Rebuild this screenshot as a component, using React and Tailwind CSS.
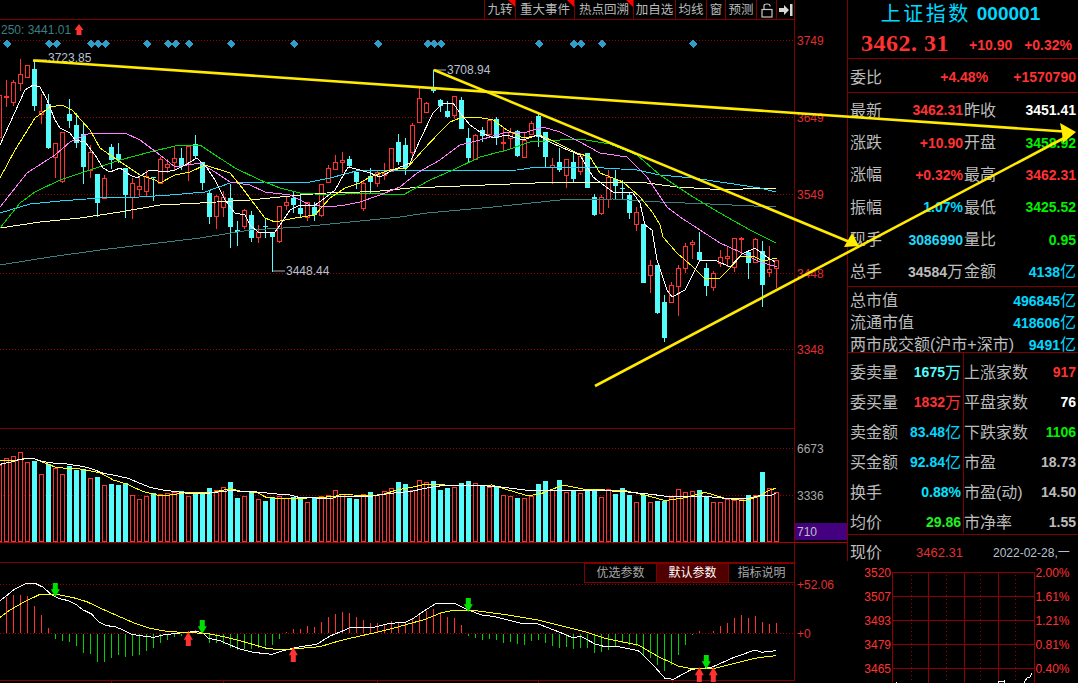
import React from "react";

const RED = "#ff3232";
const CYAN = "#54fcfc";
const LINE = "#800000";
const DOT = "#9a0000";

// k, wickTop, bodyTop, bodyBottom, wickBottom, up
const candles = [
  [-1, 95, 95, 137, 137, 1], [0, 80, 96, 97, 107, 1], [1, 80, 82, 102, 106, 1], [2, 59, 74, 83, 91, 1],
  [3, 65, 65, 77, 78, 1], [4, 61, 69, 106, 111, 0], [5, 94, 111, 114, 124, 1], [6, 94, 104, 148, 149, 0],
  [7, 143, 143, 157, 178, 1], [8, 132, 132, 181, 183, 1], [9, 99, 114, 121, 128, 0], [10, 113, 125, 143, 148, 0],
  [11, 122, 134, 167, 184, 0], [12, 145, 152, 170, 178, 1], [13, 174, 174, 203, 217, 0], [14, 175, 178, 198, 198, 1],
  [15, 144, 147, 160, 169, 0], [16, 143, 154, 160, 163, 0], [17, 168, 168, 195, 218, 0], [18, 178, 183, 197, 219, 1],
  [19, 177, 186, 189, 197, 1], [20, 170, 176, 191, 197, 1], [21, 177, 177, 178, 201, 0], [22, 157, 159, 183, 183, 1],
  [23, 159, 164, 167, 173, 1], [24, 146, 158, 162, 170, 1], [25, 148, 158, 166, 170, 0], [26, 146, 146, 164, 181, 1],
  [27, 135, 144, 156, 158, 0], [28, 162, 162, 183, 190, 0], [29, 190, 193, 217, 224, 0], [30, 195, 196, 216, 229, 1],
  [31, 191, 197, 207, 217, 1], [32, 184, 198, 227, 248, 0], [33, 221, 230, 232, 246, 0], [34, 209, 210, 226, 229, 1],
  [35, 211, 215, 238, 242, 0], [36, 225, 232, 237, 243, 1], [37, 219, 226, 227, 238, 0], [38, 232, 232, 237, 272, 0],
  [39, 206, 206, 241, 243, 1], [40, 197, 202, 205, 210, 1], [41, 192, 198, 205, 213, 0], [42, 194, 208, 214, 217, 0],
  [43, 202, 202, 217, 221, 1], [44, 202, 207, 215, 221, 0], [45, 184, 184, 215, 217, 1], [46, 165, 168, 182, 182, 1],
  [47, 155, 162, 169, 170, 1], [48, 152, 160, 162, 173, 1], [49, 156, 159, 166, 168, 0], [50, 172, 172, 182, 189, 0],
  [51, 180, 183, 208, 211, 1], [52, 168, 176, 182, 193, 0], [53, 170, 172, 183, 187, 1], [54, 163, 173, 175, 180, 1],
  [55, 148, 148, 171, 172, 1], [56, 134, 142, 162, 165, 0], [57, 138, 145, 168, 175, 0], [58, 123, 125, 152, 160, 1],
  [59, 87, 98, 122, 123, 1], [60, 102, 103, 112, 113, 1], [61, 70, 87, 91, 93, 0], [62, 99, 100, 106, 112, 0],
  [63, 101, 111, 117, 118, 0], [64, 96, 96, 115, 119, 1], [65, 97, 100, 129, 129, 0], [66, 128, 138, 158, 162, 0],
  [67, 134, 135, 159, 160, 1], [68, 127, 130, 136, 142, 0], [69, 119, 120, 134, 137, 1], [70, 117, 119, 138, 145, 0],
  [71, 128, 142, 143, 152, 1], [72, 128, 132, 138, 148, 1], [73, 130, 131, 156, 157, 0], [74, 132, 140, 157, 157, 1],
  [75, 121, 123, 134, 135, 1], [76, 113, 116, 137, 147, 0], [77, 132, 132, 157, 167, 0], [78, 158, 165, 167, 184, 1],
  [79, 148, 162, 170, 172, 0], [80, 159, 159, 175, 188, 1], [81, 152, 162, 179, 182, 0], [82, 153, 156, 171, 175, 1],
  [83, 153, 153, 188, 188, 0], [84, 194, 197, 215, 216, 0], [85, 195, 197, 213, 215, 1], [86, 170, 177, 199, 208, 1],
  [87, 170, 179, 186, 199, 0], [88, 180, 188, 189, 199, 0], [89, 192, 195, 213, 219, 0], [90, 207, 212, 224, 231, 1],
  [91, 224, 224, 283, 283, 0], [92, 260, 265, 275, 293, 1], [93, 265, 265, 313, 314, 0], [94, 295, 302, 338, 342, 0],
  [95, 282, 285, 302, 302, 1], [96, 265, 268, 286, 316, 1], [97, 243, 246, 268, 273, 1], [98, 240, 242, 244, 259, 1],
  [99, 232, 252, 260, 260, 0], [100, 263, 268, 286, 296, 0], [101, 271, 273, 287, 291, 1], [102, 250, 257, 263, 267, 1],
  [103, 247, 256, 258, 267, 1], [104, 238, 238, 267, 272, 1], [105, 237, 238, 239, 255, 1], [106, 250, 252, 263, 279, 0],
  [107, 238, 239, 262, 263, 1], [108, 241, 251, 285, 307, 0], [109, 246, 269, 272, 277, 1], [110, 260, 260, 268, 288, 1],
];

const maLines = [
  ["#3d7f80", [[0, 265], [50, 257], [100, 250], [150, 244], [200, 238], [250, 230], [300, 227], [350, 222], [400, 217], [427, 213], [493, 207], [560, 200], [613, 199], [660, 202], [710, 204], [776, 207]]],
  ["#ffffb0", [[0, 228], [40, 222], [80, 218], [120, 212], [160, 205], [200, 203], [250, 200], [300, 195], [340, 192], [360, 192], [380, 191], [410, 188], [460, 186], [510, 184], [560, 182], [593, 182], [647, 183], [677, 187], [710, 189], [743, 189], [776, 188]]],
  ["#20d8f8", [[0, 213], [30, 204], [60, 201], [100, 198], [140, 197], [170, 195], [205, 192], [230, 183], [265, 182], [310, 182], [330, 178], [360, 170], [403, 170], [460, 171], [517, 170], [537, 167], [587, 167], [637, 170], [660, 175], [693, 178], [727, 183], [760, 188], [776, 192]]],
  ["#00e000", [[0, 228], [20, 203], [35, 192], [60, 180], [90, 170], [120, 160], [150, 152], [175, 146], [200, 145], [215, 155], [235, 168], [260, 180], [280, 188], [300, 193], [330, 195], [360, 193], [403, 195], [430, 180], [453, 170], [480, 157], [507, 150], [530, 142], [560, 140], [580, 139], [610, 144], [637, 155], [660, 175], [693, 197], [720, 213], [750, 230], [776, 243]]],
  ["#ff80ff", [[0, 207], [27, 173], [55, 155], [70, 142], [90, 133], [110, 134], [125, 133], [140, 140], [160, 155], [175, 167], [200, 163], [215, 172], [230, 182], [250, 185], [265, 192], [290, 195], [310, 205], [330, 207], [345, 205], [360, 202], [380, 195], [400, 187], [417, 173], [440, 160], [460, 145], [480, 140], [503, 133], [527, 132], [543, 127], [560, 132], [580, 142], [600, 153], [627, 157], [647, 177], [667, 207], [680, 217], [700, 230], [720, 243], [740, 252], [760, 262], [777, 267]]],
  ["#ffff00", [[0, 178], [15, 150], [35, 118], [50, 107], [62, 105], [72, 110], [90, 130], [100, 148], [110, 155], [125, 165], [140, 175], [155, 180], [160, 183], [175, 175], [190, 172], [205, 165], [230, 173], [240, 185], [255, 205], [265, 218], [275, 222], [295, 218], [315, 215], [330, 198], [345, 188], [360, 183], [370, 177], [390, 170], [407, 168], [423, 150], [440, 132], [450, 122], [460, 118], [477, 117], [493, 120], [507, 130], [523, 138], [540, 135], [557, 143], [577, 153], [590, 157], [600, 173], [623, 182], [640, 197], [653, 213], [660, 225], [663, 237], [677, 253], [693, 267], [705, 279], [720, 278], [730, 268], [740, 257], [753, 256], [763, 261], [777, 258]]],
  ["#ffffff", [[0, 145], [15, 112], [25, 90], [33, 85], [40, 87], [47, 100], [55, 120], [60, 128], [70, 133], [75, 140], [85, 142], [95, 155], [103, 168], [110, 172], [120, 168], [130, 175], [137, 178], [150, 170], [165, 172], [175, 170], [185, 165], [197, 158], [207, 168], [215, 180], [225, 200], [235, 213], [245, 215], [250, 225], [258, 232], [275, 232], [280, 225], [290, 210], [300, 205], [315, 205], [325, 198], [335, 190], [348, 167], [360, 170], [370, 173], [380, 177], [393, 170], [410, 163], [420, 140], [433, 113], [442, 104], [453, 103], [460, 113], [470, 125], [480, 132], [493, 138], [507, 135], [523, 140], [538, 135], [550, 142], [563, 148], [580, 155], [593, 177], [613, 192], [633, 193], [640, 203], [645, 225], [652, 230], [657, 260], [667, 290], [672, 297], [685, 290], [700, 260], [717, 261], [730, 267], [742, 254], [755, 248], [767, 257], [775, 262]]],
];

const diamonds = [7.3, 49.3, 56.7, 91.3, 98.3, 105.7, 147.3, 168.3, 175.7, 189.3, 231.3, 294.3, 378.3, 427.7, 434.3, 441.3, 539.3, 574, 581.3, 602.3, 693.3];

// volume bar tops, read at 3x (top 430), 1 = hollow red
const volume = [
  [105, 1], [85, 1], [78, 1], [67, 1], [96, 1], [93, 0], [132, 1], [101, 0], [114, 1], [132, 1], [108, 0], [120, 0], [118, 0], [144, 1], [141, 0], [165, 1], [162, 0], [165, 0], [160, 0], [195, 1], [207, 1], [198, 1], [190, 0], [193, 1], [190, 1], [186, 1], [183, 0], [198, 1], [192, 0], [186, 0], [174, 0], [180, 1], [171, 1], [156, 0], [204, 0], [198, 1], [183, 0], [207, 1], [213, 0], [203, 0], [198, 1], [204, 1], [202, 0], [203, 0], [216, 1], [204, 0], [198, 1], [195, 1], [181, 1], [193, 1], [204, 0], [207, 0], [192, 1], [186, 0], [195, 1], [183, 1], [174, 1], [156, 0], [162, 0], [180, 1], [150, 1],
  [157, 1], [153, 0], [180, 0], [174, 0], [171, 1], [159, 0], [153, 0], [159, 1], [164, 0], [171, 1], [167, 0], [195, 1], [198, 1], [204, 0], [204, 1], [198, 1], [162, 0], [153, 0], [180, 1], [150, 0], [186, 1], [183, 0], [189, 1], [177, 0], [177, 0], [201, 1], [177, 1], [192, 0], [174, 0], [195, 0], [216, 1], [195, 0], [216, 1], [213, 0], [213, 0], [201, 1], [177, 1], [186, 1], [183, 1], [180, 0], [201, 0], [216, 1], [216, 1], [207, 1], [210, 1], [207, 1], [195, 0], [195, 1], [126, 0], [174, 1], [186, 1],
];

// macd histogram ends, read at 3x (top 430), zero line sits at 610
const macd = [500, 495, 495, 498, 528, 555, 595, 627, 633, 636, 648, 669, 672, 696, 696, 684, 675, 681, 678, 675, 663, 654, 639, 630, 621, 618, 604, 600, 612, 639, 639, 642, 654, 660, 657, 657, 654, 648, 645, 627, 606, 597, 597, 588, 591, 576, 561, 552, 546, 549, 561, 570, 579, 579, 582, 573, 579, 575, 567, 549, 543, 537, 546, 561, 564, 585, 618, 624, 630, 627, 630, 639, 636, 642, 645, 633, 630, 639, 648, 654, 651, 657, 654, 654, 669, 666, 660, 648, 639, 645, 648, 678, 684, 705, 722, 705, 675, 645, 615, 603, 612, 603, 588, 579, 564, 555, 564, 558, 576, 582, 579];

const join = (list, ox, oy) => list.map(([x, y]) => `${ox + x / 3},${oy + y / 3}`).join(" ");

const volWhite = join([[0, 103], [50, 92], [60, 88], [100, 85], [130, 95], [165, 100], [195, 100], [205, 103], [235, 107], [260, 112], [290, 122], [310, 130], [340, 135], [385, 145], [420, 160], [450, 172], [490, 180], [530, 185], [560, 190], [620, 190], [690, 182], [770, 186], [830, 192], [870, 195], [900, 203], [995, 205], [1020, 198], [1120, 198], [1150, 193], [1190, 188], [1230, 185], [1275, 175], [1325, 167], [1405, 165], [1495, 170], [1575, 180], [1645, 183], [1705, 180], [1775, 180], [1875, 185], [1955, 193], [2005, 200], [2105, 198], [2175, 205], [2245, 205], [2275, 198], [2315, 195], [2327, 190]], 0, 430);
const volYellow = join([[0, 90], [50, 90], [75, 85], [105, 87], [130, 97], [170, 113], [240, 117], [300, 128], [340, 150], [380, 162], [430, 185], [470, 195], [510, 195], [560, 188], [640, 187], [690, 176], [730, 185], [770, 187], [800, 203], [850, 205], [900, 205], [1000, 200], [1025, 193], [1060, 195], [1105, 198], [1150, 193], [1190, 180], [1230, 173], [1275, 163], [1335, 165], [1415, 168], [1475, 165], [1515, 177], [1585, 198], [1625, 190], [1690, 165], [1755, 178], [1875, 182], [1935, 195], [1995, 212], [2055, 203], [2115, 187], [2175, 205], [2235, 212], [2275, 200], [2305, 182], [2327, 175]], 0, 430);
const difLine = join([[0, 512], [20, 497], [40, 480], [60, 470], [80, 460], [105, 460], [130, 472], [155, 495], [175, 505], [205, 512], [230, 525], [250, 540], [275, 552], [295, 575], [320, 587], [345, 590], [370, 600], [395, 613], [430, 618], [460, 622], [490, 615], [530, 610], [590, 604], [610, 610], [625, 625], [660, 632], [690, 645], [720, 657], [760, 667], [815, 673], [850, 662], [900, 650], [950, 643], [990, 618], [1030, 602], [1050, 593], [1120, 592], [1170, 580], [1215, 577], [1240, 565], [1275, 541], [1305, 522], [1365, 520], [1405, 540], [1445, 555], [1485, 560], [1535, 573], [1565, 580], [1615, 582], [1675, 605], [1715, 622], [1745, 620], [1785, 642], [1815, 650], [1855, 650], [1915, 662], [1955, 700], [1995, 745], [2020, 748], [2075, 718], [2135, 712], [2195, 685], [2265, 660], [2285, 667], [2327, 662]], 0, 430);
const deaLine = join([[0, 562], [30, 540], [70, 517], [120, 493], [170, 493], [220, 503], [260, 515], [320, 543], [400, 578], [450, 595], [500, 604], [560, 608], [620, 610], [680, 622], [730, 635], [800, 655], [850, 660], [900, 655], [960, 650], [1020, 632], [1080, 618], [1130, 607], [1190, 592], [1275, 568], [1325, 548], [1365, 540], [1435, 543], [1525, 555], [1615, 570], [1755, 605], [1815, 625], [1915, 645], [1975, 680], [2035, 708], [2075, 716], [2145, 715], [2235, 692], [2275, 683], [2327, 677]], 0, 430);

const Arrow = ({ x, top, bottom, color, down }) => {
  const shaftEnd = down ? top + (bottom - top) * 0.45 : bottom - (bottom - top) * 0.45;
  const points = down
    ? `${x - 2.5},${top} ${x + 2.5},${top} ${x + 2.5},${shaftEnd} ${x + 4.5},${shaftEnd} ${x},${bottom} ${x - 4.5},${shaftEnd} ${x - 2.5},${shaftEnd}`
    : `${x},${top} ${x + 4.5},${shaftEnd} ${x + 2.5},${shaftEnd} ${x + 2.5},${bottom} ${x - 2.5},${bottom} ${x - 2.5},${shaftEnd} ${x - 4.5},${shaftEnd}`;
  return <polygon points={points} fill={color} />;
};

const MainPane = () => (
  <svg width="847" height="409" viewBox="0 20 847 409" className="block text-[12px]">
    <g shapeRendering="crispEdges">
      {[40, 117, 194, 273, 349].map((y) => (
        <line key={y} x1="0" x2="794" y1={y + 0.5} y2={y + 0.5} stroke={DOT} strokeDasharray="1 2" />
      ))}
      <rect x="794" y="20" width="1" height="409" fill={LINE} />
      <rect x="0" y="428" width="795" height="1" fill={LINE} />
      {candles.map(([k, wt, bt, bb, wb, up]) => (
        <g key={k}>
          <rect x={6 + 7 * k} y={wt} width="1" height={wb - wt} fill={up ? RED : CYAN} />
          {up ? (
            <rect x={4.5 + 7 * k} y={bt + 0.5} width="4" height={Math.max(bb - bt, 1)} fill="#000" stroke={RED} />
          ) : (
            <rect x={4 + 7 * k} y={bt} width="5" height={Math.max(bb - bt, 1)} fill={CYAN} />
          )}
        </g>
      ))}
      {maLines.map(([color, list]) => (
        <polyline key={color} points={list.map((p) => p.join(",")).join(" ")} fill="none" stroke={color} strokeWidth="1" />
      ))}
      {diamonds.map((x) => (
        <polygon key={x} points={`${x - 4.3},44 ${x},39.7 ${x + 4.3},44 ${x},48.3`} fill="#2e9fc8" />
      ))}
    </g>
    <text x="1" y="33.5" fill="#3d7f80" fontSize="12">250: 3441.01</text>
    <Arrow x={79} top={24} bottom={35} color={RED} />
    <line x1="34" x2="47" y1="60" y2="60" stroke="#b0b0b0" />
    <text x="48" y="62" fill="#b8c0d0">3723.85</text>
    <line x1="433" x2="446" y1="70" y2="70" stroke="#b0b0b0" />
    <rect x="433" y="70" width="1" height="20" fill={CYAN} />
    <text x="447" y="74" fill="#b8c0d0">3708.94</text>
    <line x1="273" x2="285" y1="271" y2="271" stroke="#b0b0b0" />
    <text x="286" y="275" fill="#b8c0d0">3448.44</text>
    {[[3749, 40], [3649, 117], [3549, 194], [3448, 273], [3348, 349]].map(([v, y]) => (
      <text key={v} x="797" y={y + 4.5} fill="#e03030">{v}</text>
    ))}
  </svg>
);

const VolumePane = () => (
  <svg width="847" height="114" viewBox="0 429 847 114" className="block text-[12px]">
    <g shapeRendering="crispEdges">
      {[448, 495].map((y) => (
        <line key={y} x1="0" x2="794" y1={y + 0.5} y2={y + 0.5} stroke={DOT} strokeDasharray="1 2" />
      ))}
      <rect x="794" y="429" width="1" height="114" fill={LINE} />
      {volume.map(([top, hollow], i) => {
        const k = i - 1;
        const y = Math.round(430 + top / 3);
        return hollow ? (
          <rect key={k} x={4.5 + 7 * k} y={y + 0.5} width="4" height={541 - y} fill="#000" stroke={RED} />
        ) : (
          <rect key={k} x={4 + 7 * k} y={y} width="5" height={542 - y} fill={CYAN} />
        );
      })}
      <polyline points={volYellow} fill="none" stroke="#ffff00" />
      <polyline points={volWhite} fill="none" stroke="#ffffff" />
      <rect x="0" y="542" width="847" height="1" fill="#b00000" />
      <rect x="795" y="523" width="52" height="17" fill="#43007f" />
    </g>
    <text x="797" y="453" fill="#a8a8a8">6673</text>
    <text x="797" y="500" fill="#a8a8a8">3336</text>
    <text x="797" y="536" fill="#c0c0c0">710</text>
  </svg>
);

const MacdPane = () => (
  <div className="relative h-[140px] w-[847px]">
    <svg width="847" height="140" viewBox="0 543 847 140" className="block text-[12px]">
      <g shapeRendering="crispEdges">
        <rect x="0" y="562" width="795" height="1" fill={LINE} />
        <rect x="0" y="680" width="795" height="1" fill={LINE} />
        <rect x="794" y="543" width="1" height="138" fill={LINE} />
        {[111, 223, 377, 538, 672].map((x) => (
          <rect key={x} x={x} y="681" width="1" height="2" fill={LINE} />
        ))}
        <line x1="0" x2="794" y1="584.5" y2="584.5" stroke={DOT} strokeDasharray="1 2" />
        <line x1="0" x2="794" y1="633.5" y2="633.5" stroke={DOT} strokeDasharray="1 2" />
        {macd.map((end, k) => {
          const y = Math.round(430 + end / 3);
          return end < 610 ? (
            <rect key={k} x={6 + 7 * k} y={y} width="1" height={633 - y} fill={RED} />
          ) : (
            <rect key={k} x={6 + 7 * k} y="634" width="1" height={y - 634} fill="#00d000" />
          );
        })}
        <polyline points={difLine} fill="none" stroke="#ffffff" />
        <polyline points={deaLine} fill="none" stroke="#ffff00" />
      </g>
      <Arrow x={55.3} top={583} bottom={597} color="#00e000" down />
      <Arrow x={202.3} top={620} bottom={634} color="#00e000" down />
      <Arrow x={468.3} top={598} bottom={612} color="#00e000" down />
      <Arrow x={706.3} top={655} bottom={669} color="#00e000" down />
      <Arrow x={188.3} top={632} bottom={646} color={RED} />
      <Arrow x={293.3} top={647} bottom={662} color={RED} />
      <Arrow x={699.3} top={667} bottom={682} color={RED} />
      <Arrow x={713.3} top={667} bottom={682} color={RED} />
      <text x="797" y="589" fill="#e03030">+52.06</text>
      <text x="797" y="638" fill="#e03030">+0</text>
    </svg>
    <div className="absolute left-[584px] top-[20px] flex h-[20px] w-[211px] border border-[#800000] text-[12px] leading-[18px] text-[#a8a8a8]">
      <div className="w-[71px] text-center">优选参数</div>
      <div className="w-[73px] border-x border-[#800000] bg-[#500000] text-center text-white">默认参数</div>
      <div className="flex-1 text-center">指标说明</div>
    </div>
  </div>
);

const ToolItem = ({ w, flag, children }) => (
  <div className={`relative flex h-[19px] items-center justify-center border-l border-[#800000] pt-[1px] text-[12.5px] text-[#b8b8b8] ${w}`}>
    {children}
    {flag && (
      <span className="absolute right-0 top-0 h-0 w-0 border-l-[7px] border-t-[7px] border-l-transparent border-t-[#ff0000]" />
    )}
  </div>
);

const Toolbar = () => (
  <div className="flex h-[20px] w-[847px]">
    <div className="h-[20px] w-[795px] border-b border-[#800000]">
      <div className="flex justify-end border-r border-[#800000]">
        <ToolItem w="w-[31px]" flag>九转</ToolItem>
        <ToolItem w="w-[59px]" flag>重大事件</ToolItem>
        <ToolItem w="w-[59px]" flag>热点回溯</ToolItem>
        <ToolItem w="w-[42px]">加自选</ToolItem>
        <ToolItem w="w-[31px]">均线</ToolItem>
        <ToolItem w="w-[19px]">窗</ToolItem>
        <ToolItem w="w-[31px]">预测</ToolItem>
        <ToolItem w="w-[20px]">
          <svg width="12" height="16" viewBox="0 0 12 16" fill="none">
            <path d="M3 7V3.5C3 1.5 9 1.5 9 3.5V4.5" stroke="#c8c8c8" strokeWidth="1.2" />
            <rect x="1" y="7.5" width="10" height="7.5" stroke="#c8c8c8" strokeWidth="1.2" />
          </svg>
        </ToolItem>
        <ToolItem w="w-[18px]">
          <svg width="14" height="12" viewBox="0 0 14 12" fill="#d8d8d8">
            <path d="M0 4H5V1L10 6L5 11V8H0Z" />
            <rect x="11" y="0" width="2.5" height="12" />
          </svg>
        </ToolItem>
      </div>
    </div>
  </div>
);

const Num = ({ c, children }) => <span className={`text-[14px] font-bold ${c}`}>{children}</span>;
const Unit = ({ c, children }) => <span className={`text-[16px] ${c}`}>{children}</span>;

const QuoteRow = ({ a, av, ac, b, bv, bc }) => (
  <div className="flex h-[32.4px] items-center pt-[3px]">
    <div className="flex w-[115px] items-center justify-between pl-[2px]">
      <span>{a}</span>
      {av && <Num c={ac}>{av}</Num>}
    </div>
    <div className="flex flex-1 items-center justify-between pl-[1px] pr-[2px]">
      <span>{b}</span>
      {bv && <Num c={bc}>{bv}</Num>}
    </div>
  </div>
);

const StatRow = ({ a, v, u, c }) => (
  <div className="flex h-[30px] items-center justify-between pt-[9px]">
    <span>{a}</span>
    <span className="flex items-center">
      <Num c={c}>{v}</Num>
      {u && <Unit c={c}>{u}</Unit>}
    </span>
  </div>
);

const MiniChart = () => (
  <svg width="231" height="122" viewBox="847 561 231 122" className="block text-[12px]">
    <g shapeRendering="crispEdges">
      {[572, 596, 620, 644, 668].map((y) => (
        <rect key={y} x="892" y={y} width="143" height="1" fill="#900000" />
      ))}
      {[892, 928, 964, 998, 1034].map((x) => (
        <rect key={x} x={x} y="572" width="1" height="111" fill="#900000" />
      ))}
      {[911, 946, 980, 1015].map((x) => (
        <line key={x} x1={x + 0.5} x2={x + 0.5} y1="575" y2="683" stroke={DOT} strokeDasharray="1 3" />
      ))}
      <polyline points="1024,683 1027,678 1030,677 1032,673" fill="none" stroke="#fff" />
      <polyline points="998,683 999,681 1001,682 1004,681 1004,683" fill="none" stroke="#fff" />
      <rect x="896" y="682" width="1" height="1" fill="#fff" />
    </g>
    {[["3520", "2.00%", 572], ["3507", "1.61%", 596], ["3493", "1.21%", 620], ["3479", "0.81%", 644], ["3465", "0.40%", 668]].map(([a, b, y]) => (
      <g key={a} fill="#ff3232">
        <text x="891" y={y + 5} textAnchor="end">{a}</text>
        <text x="1035.5" y={y + 5}>{b}</text>
      </g>
    ))}
  </svg>
);

const Panel = () => (
  <div className="flex w-[231px] flex-col text-[16px] text-[#bcbcbc]">
    <div className="h-[535px] border-b border-l border-[#800000]">
      <div className="flex h-[26px] items-center justify-center gap-[6px] pr-[5px] pt-[2px] font-bold text-[#00d8ff]">
        <span className="text-[20px] font-normal tracking-[2.5px]">上证指数</span>
        <span className="text-[19px]">000001</span>
      </div>
      <div className="flex h-[33px] items-center border-b border-[#800000] pl-[13px] pr-[6px] pt-[1px] font-bold text-[#ff3232]">
        <span className="w-[108px] whitespace-pre text-[24px] tracking-[0.5px] [font-family:'Liberation_Serif',serif]">3462. 31</span>
        <span className="flex-1 pt-[6px] text-[14px]">+10.90</span>
        <span className="pt-[6px] text-[14px]">+0.32%</span>
      </div>
      <div className="flex h-[34px] items-center justify-between border-b border-[#800000] px-[2px] pt-[4px]">
        <span>委比</span>
        <Num c="ml-[33px] text-[#ff3232]">+4.48%</Num>
        <Num c="text-[#ff3232]">+1570790</Num>
      </div>
      <QuoteRow a="最新" av="3462.31" ac="text-[#ff3232]" b="昨收" bv="3451.41" bc="text-white" />
      <QuoteRow a="涨跌" av="+10.90" ac="text-[#ff3232]" b="开盘" bv="3458.92" bc="text-[#00f000]" />
      <QuoteRow a="涨幅" av="+0.32%" ac="text-[#ff3232]" b="最高" bv="3462.31" bc="text-[#ff3232]" />
      <QuoteRow a="振幅" av="1.07%" ac="text-[#00d8ff]" b="最低" bv="3425.52" bc="text-[#00f000]" />
      <QuoteRow a="现手" av="3086990" ac="text-[#20d8f8]" b="量比" bv="0.95" bc="text-[#00f000]" />
      <div className="flex h-[32.4px] items-center border-b border-[#800000] pt-[3px]">
        <div className="flex w-[115px] items-center justify-between pl-[2px]">
          <span>总手</span>
          <span className="flex items-center"><Num c="text-[#bcbcbc]">34584</Num><Unit c="text-[#bcbcbc]">万</Unit></span>
        </div>
        <div className="flex flex-1 items-center justify-between pl-[1px] pr-[2px]">
          <span>金额</span>
          <span className="flex items-center"><Num c="text-[#00d8ff]">4138</Num><Unit c="text-[#00d8ff]">亿</Unit></span>
        </div>
      </div>
      <div className="h-[66px] border-b border-[#800000] px-[2px]">
        {[["总市值", "496845"], ["流通市值", "418606"], ["两市成交额(沪市+深市)", "9491"]].map(([a, v]) => (
          <div key={a} className="flex h-[22px] items-center justify-between pt-[6px]">
            <span>{a}</span>
            <span className="flex items-center"><Num c="text-[#00d8ff]">{v}</Num><Unit c="text-[#00d8ff]">亿</Unit></span>
          </div>
        ))}
      </div>
      <div className="flex">
        <div className="w-[116px] border-r border-[#800000] px-[2px]">
          <StatRow a="委卖量" v="1675" u="万" c="text-[#54fcfc]" />
          <StatRow a="委买量" v="1832" u="万" c="text-[#ff3232]" />
          <StatRow a="卖金额" v="83.48" u="亿" c="text-[#00d8ff]" />
          <StatRow a="买金额" v="92.84" u="亿" c="text-[#00d8ff]" />
          <StatRow a="换手" v="0.88%" c="text-[#00e5ff]" />
          <StatRow a="均价" v="29.86" c="text-[#20f020]" />
        </div>
        <div className="flex-1 pr-[2px]">
          <StatRow a="上涨家数" v="917" c="text-[#ff3232]" />
          <StatRow a="平盘家数" v="76" c="text-white" />
          <StatRow a="下跌家数" v="1106" c="text-[#00f000]" />
          <StatRow a="市盈" v="18.73" c="text-[#bcbcbc]" />
          <StatRow a="市盈(动)" v="14.50" c="text-[#bcbcbc]" />
          <StatRow a="市净率" v="1.55" c="text-[#bcbcbc]" />
        </div>
      </div>
    </div>
    <div className="flex h-[26px] items-center border-l border-[#800000] pl-[2px] pr-[3px] pt-[10px]">
      <span className="w-[66px]">现价</span>
      <span className="w-[77px] text-[13px] text-[#e03030]">3462.31</span>
      <span className="text-[12px] text-[#b8c0d0]">2022-02-28,一</span>
    </div>
    <MiniChart />
  </div>
);

const TrendLines = () => (
  <svg width="1078" height="683" viewBox="0 0 1078 683" className="pointer-events-none absolute left-0 top-0">
    <g stroke="#ffea00" strokeWidth="2.6" fill="#ffea00">
      <line x1="33" y1="60.5" x2="1064" y2="131.5" />
      <line x1="595" y1="386" x2="1066" y2="137" />
      <line x1="434" y1="70" x2="852" y2="243" />
    </g>
    <polygon points="1060,123 1076,132 1063,143 1062,133" fill="#ffee00" />
    <polygon points="852,233 859,246 844,247" fill="#ffee00" />
  </svg>
);

export default function App() {
  return (
    <div className="relative flex h-[683px] w-[1078px] overflow-hidden bg-black [font-family:'Liberation_Sans','Noto_Sans_CJK_SC',sans-serif]">
      <div className="w-[847px]">
        <Toolbar />
        <MainPane />
        <VolumePane />
        <MacdPane />
      </div>
      <Panel />
      <TrendLines />
    </div>
  );
}
